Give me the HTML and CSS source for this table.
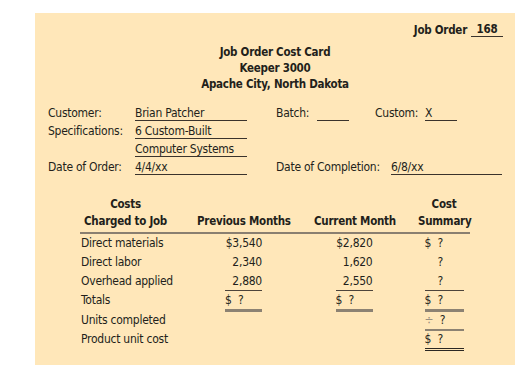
FILE: index.html
```html
<!DOCTYPE html>
<html>
<head>
<meta charset="utf-8">
<link rel="stylesheet" href="styles.css">
</head>
<body>
<div class="card">
  <div class="jobrow">
    <span class="b">Job Order</span>
    <span class="field jobno b">168</span>
  </div>
  <div class="title b">
    <div>Job Order Cost Card</div>
    <div>Keeper 3000</div>
    <div>Apache City, North Dakota</div>
  </div>
  <div class="info">
    <div class="lbl">Customer:</div>
    <div><span class="field wide">Brian Patcher</span></div>
    <div class="right">
      <span class="lbl-batch">Batch:</span><span class="field short"></span>
      <span class="lbl-custom">Custom:</span><span class="field short">X</span>
    </div>

    <div class="lbl">Specifications:</div>
    <div><span class="field wide">6 Custom-Built</span></div>
    <div></div>

    <div class="lbl"></div>
    <div><span class="field wide">Computer Systems</span></div>
    <div></div>

    <div class="lbl">Date of Order:</div>
    <div><span class="field wide">4/4/xx</span></div>
    <div class="right">
      <span class="lbl-compl">Date of Completion:</span><span class="field long">6/8/xx</span>
    </div>
  </div>

  <div class="table">
    <div class="cols thead b">
      <div class="h1"><span>Costs<br>Charged to Job</span></div>
      <div class="hc">Previous Months</div>
      <div class="hc">Current Month</div>
      <div class="hc">Cost<br>Summary</div>
    </div>
    <div class="cols row">
      <div>Direct materials</div>
      <div class="cell"><span class="amt">$3,540</span></div>
      <div class="cell"><span class="amt">$2,820</span></div>
      <div class="cell"><span class="amt sum">$&nbsp; ?</span></div>
    </div>
    <div class="cols row">
      <div>Direct labor</div>
      <div class="cell"><span class="amt">2,340</span></div>
      <div class="cell"><span class="amt">1,620</span></div>
      <div class="cell"><span class="amt sum"><span class="hid">$</span>&nbsp; ?</span></div>
    </div>
    <div class="cols row">
      <div>Overhead applied</div>
      <div class="cell"><span class="amt under">2,880</span></div>
      <div class="cell"><span class="amt under">2,550</span></div>
      <div class="cell"><span class="amt sum under"><span class="hid">$</span>&nbsp; ?</span></div>
    </div>
    <div class="cols row totals">
      <div>Totals</div>
      <div class="cell"><span class="amt left bar">$&nbsp; ?</span></div>
      <div class="cell"><span class="amt left bar">$&nbsp; ?</span></div>
      <div class="cell"><span class="amt sum bar">$&nbsp; ?</span></div>
    </div>
    <div class="cols row">
      <div>Units completed</div>
      <div></div>
      <div></div>
      <div class="cell"><span class="amt sum thin"><span class="div">÷</span>&nbsp; ?</span></div>
    </div>
    <div class="cols row">
      <div>Product unit cost</div>
      <div></div>
      <div></div>
      <div class="cell"><span class="amt sum dbl">$&nbsp; ?</span></div>
    </div>
  </div>
</div>
</body>
</html>
```

FILE: styles.css
```css
html, body {
  margin: 0;
  padding: 0;
  background: #ffffff;
}
body {
  font-family: "DejaVu Sans Condensed", "DejaVu Sans", sans-serif;
  font-stretch: condensed;
  font-size: 12px;
  letter-spacing: -0.25px;
  color: #231f1b;
}
.b { font-weight: bold; font-size: 11.5px; letter-spacing: -0.25px; }
.card {
  margin: 13px 0 0 35px;
  width: 480px;
  height: 352px;
  background: #ffe7b9;
  box-sizing: border-box;
  padding-top: 9px;
}
.jobrow {
  display: flex;
  justify-content: flex-end;
  align-items: flex-end;
  padding-right: 12px;
  gap: 4px;
  line-height: 14px;
}
.field {
  display: inline-block;
  line-height: 14px;
  min-height: 14px;
  border-bottom: 1px solid #3a332c;
  vertical-align: bottom;
}
.jobno { width: 32px; text-align: center; }
.title {
  margin-top: 7px;
  text-align: center;
  line-height: 16px;
}
.info {
  margin-top: 14px;
  padding-left: 13px;
  display: grid;
  grid-template-columns: 87px 141px 1fr;
  grid-auto-rows: 18px;
  line-height: 14px;
}
.field.wide { width: 112px; }
.field.short { width: 32px; }
.field.long { width: 111px; }
.right { display: flex; align-items: flex-start; }
.lbl-batch { width: 41px; }
.lbl-custom { width: 50px; margin-left: 26px; }
.lbl-compl { width: 115px; }

.table {
  margin-top: 18px;
  margin-left: 45px;
  width: 390px;
}
.cols {
  display: grid;
  grid-template-columns: 93px 93px 80px 52px;
  column-gap: 24px;
}
.thead {
  line-height: 17px;
  align-items: end;
  padding-bottom: 2px;
  border-bottom: 2px solid #8a7f70;
}
.h1 { padding-left: 4px; white-space: nowrap; }
.h1 span { display: inline-block; text-align: center; }
.hc { text-align: center; white-space: nowrap; }
.row {
  height: 19px;
  align-items: stretch;
  line-height: 18px;
}
.row > div:first-child { padding-left: 1px; white-space: nowrap; }
.row.totals { height: 20px; }
.cell { display: flex; justify-content: center; }
.amt {
  display: block;
  width: 37px;
  text-align: right;
  box-sizing: border-box;
}
.amt.left { text-align: left; }
.amt.sum { width: 39px; text-align: left; }
.hid { visibility: hidden; }
.div { color: #9a9080; }
.under { border-bottom: 1.5px solid #4d443b; }
.bar { border-bottom: 3px solid #8c8273; }
.thin { border-bottom: 2px solid #8c8273; }
.dbl { border-bottom: 3px double #2b2723; }
```
